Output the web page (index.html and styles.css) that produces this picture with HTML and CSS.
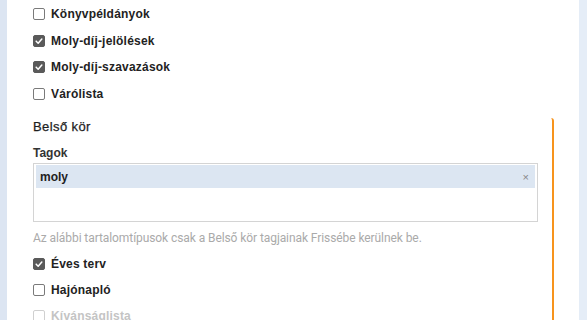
FILE: index.html
```html
<!DOCTYPE html>
<html lang="hu">
<head>
<meta charset="utf-8">
<title>Beállítások</title>
<link rel="stylesheet" href="styles.css">
</head>
<body>
<div class="page">
  <div class="strip-left"></div>
  <div class="main">
    <ul class="opts">
      <li class="opt"><span class="cb"></span><span class="lbl">Könyvpéldányok</span></li>
      <li class="opt"><span class="cb on"><svg viewBox="0 0 12 12"><path d="M2.6 6.2 L5 8.6 L9.4 3.6" /></svg></span><span class="lbl">Moly-díj-jelölések</span></li>
      <li class="opt"><span class="cb on"><svg viewBox="0 0 12 12"><path d="M2.6 6.2 L5 8.6 L9.4 3.6" /></svg></span><span class="lbl">Moly-díj-szavazások</span></li>
      <li class="opt"><span class="cb"></span><span class="lbl">Várólista</span></li>
    </ul>
    <section class="inner">
      <h3 class="inner-title">Belső kör</h3>
      <div class="field-label">Tagok</div>
      <div class="tagbox">
        <div class="tag"><span class="tag-name">moly</span><span class="tag-x">×</span></div>
      </div>
      <p class="help">Az alábbi tartalomtípusok csak a Belső kör tagjainak Frissébe kerülnek be.</p>
      <ul class="opts opts-inner">
        <li class="opt"><span class="cb on"><svg viewBox="0 0 12 12"><path d="M2.6 6.2 L5 8.6 L9.4 3.6" /></svg></span><span class="lbl">Éves terv</span></li>
        <li class="opt"><span class="cb"></span><span class="lbl">Hajónapló</span></li>
        <li class="opt disabled"><span class="cb"></span><span class="lbl">Kívánságlista</span></li>
      </ul>
    </section>
  </div>
  <div class="strip-right"></div>
</div>
</body>
</html>
```
FILE: styles.css
```css
html, body {
  margin: 0;
  padding: 0;
  background: #ffffff;
}
body {
  font-family: "Liberation Sans", Arial, sans-serif;
  color: #222222;
  overflow: hidden;
}
.page {
  display: flex;
  width: 587px;
  height: 320px;
  overflow: hidden;
}
.strip-left {
  width: 7px;
  flex: none;
  background: #dce5f2;
}
.strip-right {
  width: 8px;
  flex: none;
  background: #e5edf7;
}
.main {
  flex: 1;
  padding: 1px 25px 0 26px;
  min-width: 0;
}
.opts {
  list-style: none;
  margin: 0;
  padding: 0;
}
.opt {
  display: flex;
  align-items: center;
  height: 26.5px;
}
.cb {
  width: 10px;
  height: 10px;
  border: 1px solid #7a7a7a;
  border-radius: 2px;
  background: #ffffff;
  flex: none;
  display: flex;
  align-items: center;
  justify-content: center;
  margin-right: 6px;
}
.cb.on {
  background: #5a5a5a;
  border-color: #5a5a5a;
}
.cb svg {
  width: 10px;
  height: 10px;
  fill: none;
  stroke: #ffffff;
  stroke-width: 1.8;
  stroke-linecap: round;
  stroke-linejoin: round;
}
.lbl {
  font-size: 12px;
  font-weight: bold;
  letter-spacing: 0.2px;
}
.disabled .cb {
  border-color: #d0d0d0;
}
.disabled .lbl {
  color: #c4c4c4;
}
.inner {
  margin-top: 11px;
  border-right: 2px solid #f7941d;
  border-top-right-radius: 3px;
  padding-right: 14px;
}
.inner-title {
  margin: 0;
  font-size: 13px;
  font-weight: normal;
  line-height: 18px;
  color: #1e1e1e;
  letter-spacing: 0.4px;
  -webkit-text-stroke: 0.25px #1e1e1e;
}
.field-label {
  margin-top: 9px;
  font-size: 12px;
  font-weight: bold;
  line-height: 16px;
  color: #333333;
}
.tagbox {
  margin-top: 2px;
  height: 55px;
  border: 1px solid #d4d4d4;
  padding: 1px 2px;
  box-sizing: content-box;
}
.tag {
  height: 23px;
  background: #dce6f2;
  display: flex;
  align-items: center;
  justify-content: space-between;
  padding: 0 6px 0 4px;
}
.tag-name {
  font-size: 12px;
  font-weight: bold;
  color: #222222;
}
.tag-x {
  font-size: 11px;
  color: #888888;
}
.help {
  margin: 8px 0 0;
  font-size: 12px;
  line-height: 16px;
  color: #aaaaaa;
  letter-spacing: -0.08px;
  font-family: "Roboto", "Liberation Sans", sans-serif;
}
.opts-inner {
  margin-top: 5px;
}
.opts-inner .opt {
  height: 26px;
}
```
